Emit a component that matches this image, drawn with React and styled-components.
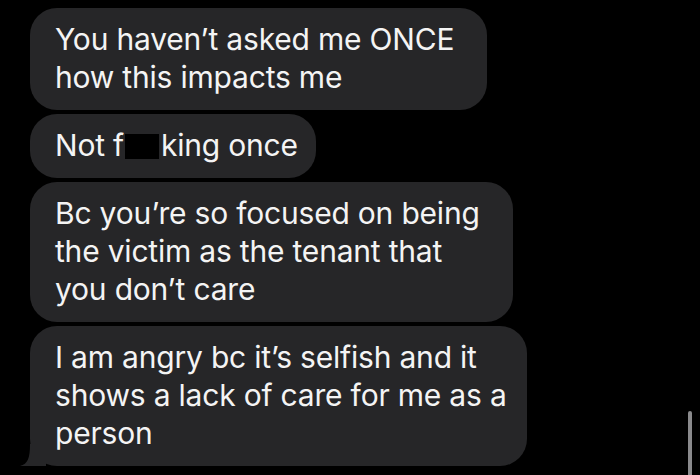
import React from 'react';
import styled, { createGlobalStyle } from 'styled-components';

const GlobalStyle = createGlobalStyle`
  html, body {
    margin: 0;
    padding: 0;
    background: #000;
  }
  body {
    font-family: Inter, "Liberation Sans", Arial, sans-serif;
  }
`;

const Screen = styled.div`
  width: 700px;
  height: 475px;
  background: #000;
  overflow: hidden;
  position: relative;
`;

const Thread = styled.div`
  display: flex;
  flex-direction: column;
  align-items: flex-start;
  gap: 4px;
  padding: 8px 0 0 30px;
`;

const Bubble = styled.div`
  position: relative;
  box-sizing: border-box;
  width: ${p => p.$w}px;
  padding: 12px 24px 14px 25px;
  background: #262628;
  border-radius: 27px;
  color: #f4f4f4;
  font-size: 30px;
  line-height: 38px;
  letter-spacing: -0.2px;
  white-space: nowrap;

  ${p => p.$tail && `
    &::after {
      content: '';
      position: absolute;
      left: -10px;
      bottom: 0;
      width: 26px;
      height: 22px;
      background: #262628;
      clip-path: path('M0 22 C 8 20, 10 14, 10 0 L 26 0 L 26 22 Z');
    }
  `}
`;

const Redacted = styled.span`
  display: inline-block;
  width: 34px;
  height: 25px;
  margin: 0 2px 0 1px;
  background: #000;
  vertical-align: -3px;
`;

const Scrollbar = styled.div`
  position: absolute;
  right: 8px;
  top: 411px;
  width: 4px;
  height: 70px;
  border-radius: 2px;
  background: #8a8a8c;
`;

export default function App() {
  return (
    <Screen>
      <GlobalStyle />
      <Thread>
        <Bubble $w={457}>
          You haven’t asked me ONCE<br />how this impacts me
        </Bubble>
        <Bubble $w={286}>
          Not f<Redacted />king once
        </Bubble>
        <Bubble $w={483}>
          Bc you’re so focused on being<br />the victim as the tenant that<br />you don’t care
        </Bubble>
        <Bubble $w={497} $tail>
          I am angry bc it’s selfish and it<br />shows a lack of care for me as a<br />person
        </Bubble>
      </Thread>
      <Scrollbar />
    </Screen>
  );
}
